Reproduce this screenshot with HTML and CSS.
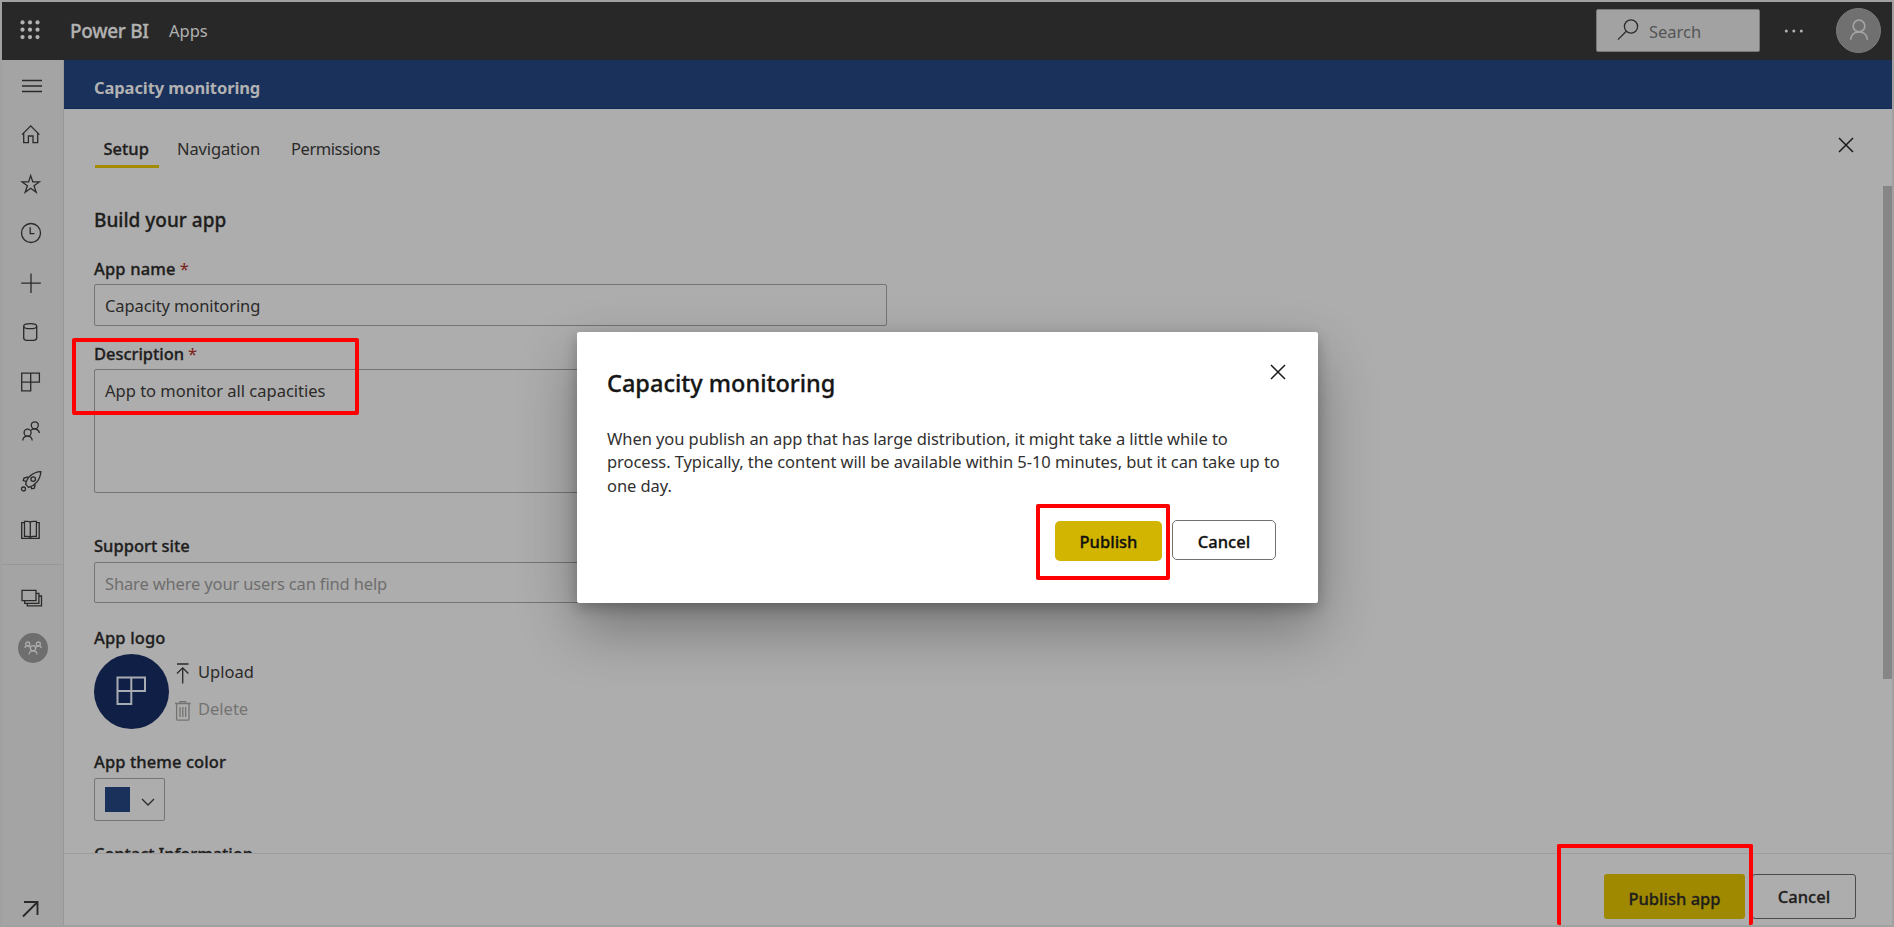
FILE: index.html
```html
<!DOCTYPE html>
<html lang="en">
<head>
<meta charset="utf-8">
<title>Power BI - Capacity monitoring</title>
<link rel="stylesheet" href="styles.css">
</head>
<body>
<div class="frame">
  <header class="topbar">
    <svg class="waffle" viewBox="0 0 20 20"><g><circle cx="2.5" cy="2.4" r="2.1"/><circle cx="10" cy="2.4" r="2.1"/><circle cx="17.5" cy="2.4" r="2.1"/><circle cx="2.5" cy="9.7" r="2.1"/><circle cx="10" cy="9.7" r="2.1"/><circle cx="17.5" cy="9.7" r="2.1"/><circle cx="2.5" cy="17.1" r="2.1"/><circle cx="10" cy="17.1" r="2.1"/><circle cx="17.5" cy="17.1" r="2.1"/></g></svg>
    <span class="brand">Power BI</span>
    <span class="area">Apps</span>
    <div class="search">
      <svg class="search-icon" viewBox="0 0 22 22"><circle cx="14" cy="7.5" r="6.6"/><path d="M9.3 12.3 1 20.6"/></svg>
      <span class="search-text">Search</span>
    </div>
    <svg class="more" viewBox="0 0 20 6"><circle cx="2.3" cy="3" r="1.5"/><circle cx="9.8" cy="3" r="1.5"/><circle cx="17.3" cy="3" r="1.5"/></svg>
    <div class="avatar"><svg viewBox="0 0 22 22"><circle cx="11" cy="7" r="5.8"/><path d="M2.6 20.8C3 15.6 6.600 12.900 11 12.900s8 2.700 8.400 7.900"/></svg></div>
  </header>
  <div class="body">
    <nav class="rail">
      <a class="item first"><svg viewBox="0 0 24 24"><path d="M3 6.500h20M3 12h20M3 17.500h20"/></svg></a>
      <a class="item"><svg viewBox="0 0 24 24"><path d="M3 12.600 11.700 3.900l8.700 8.700M4.700 11.300v9.400h4.700v-6.700h4.600v6.700h4.700v-9.400"/></svg></a>
      <a class="item"><svg viewBox="0 0 24 24"><path d="m11.700 3.600 2.100 6.300h6.500L15 13.800l2.200 6.500-5.500-4-5.500 4 2.200-6.500-5.300-3.900h6.500z"/></svg></a>
      <a class="item"><svg viewBox="0 0 24 24"><circle cx="12" cy="12" r="9.500"/><path d="M11.200 6.300v6.400h4.300"/></svg></a>
      <a class="item"><svg viewBox="0 0 24 24"><path d="M12 2.500v19.500M2.200 12.200h19.600"/></svg></a>
      <a class="item"><svg viewBox="0 0 24 24"><ellipse cx="11.200" cy="6.200" rx="6.500" ry="2.500"/><path d="M4.700 6.200v11.600c0 1.600 1.300 2.500 3 2.500h7c1.700 0 3-.9 3-2.500V6.200"/></svg></a>
      <a class="item"><svg viewBox="0 0 24 24"><path d="M2.700 3.200h17.700v9H2.700zM2.700 3.200v17.700h9V3.200"/></svg></a>
      <a class="item"><svg viewBox="0 0 24 24"><circle cx="15.800" cy="6.300" r="3.500"/><circle cx="8.600" cy="13.700" r="3.500"/><path d="M3.800 21.500c.2-2.800 2.200-4.300 4.800-4.300s4.300 1.500 4.600 4.300M12 11.200c2.600-2.200 7.700-1.700 8.400 2.800"/></svg></a>
      <a class="item"><svg viewBox="0 0 24 24"><path d="M8.200 16.900 6.700 15.400C7.600 8.300 13.800 3 21.800 2.600c-.2 8-5.800 14-12.100 15.800zM9.200 7.800l-4.200 1.300-.8 2.500 2.800.8M16.300 15.400l-1 3.800-2.600.6-.9-2.700"/><circle cx="14.200" cy="10.100" r="2.300"/><circle cx="4.500" cy="20" r="2"/></svg></a>
      <a class="item"><svg viewBox="0 0 24 24"><path d="M5.500 4.700H2.700v15.700h17.500V4.700h-2.800M5.500 18.300V3.300h3c1.600 0 2.800.4 2.800 1.500 0-1.100 1.200-1.500 2.800-1.500h3.300v15h-3.300c-1.600 0-2.800.4-2.800 1.500 0-1.100-1.200-1.500-2.800-1.500zM11.300 4.800v15"/></svg></a>
      <span class="divider"></span>
      <a class="item stack"><svg viewBox="0 0 24 24"><path d="M3 4.400h14v10.300H3zM5.700 15v2.400h14.200V7.300h-2.700M8.300 17.700v2.200h14.200V10H20"/></svg></a>
      <a class="item workspace"><span class="group"><svg viewBox="0 0 18 14"><circle cx="9" cy="7.300" r="2.600"/><circle cx="3.700" cy="3" r="2"/><circle cx="14.300" cy="3" r="2"/><path d="M5 13.600c0-2.200 1.500-3.700 4-3.700s4 1.500 4 3.700M.8 7c.2-2.500 3.500-2.800 5.300-.6M17.200 7c-.2-2.500-3.500-2.800-5.300-.6"/></svg></span></a>
      <a class="item last"><svg viewBox="0 0 24 24"><path d="M4 19.500 18.500 5M5 5h13.500v13"/></svg></a>
    </nav>
    <main class="main">
      <div class="banner"><span class="banner-title">Capacity monitoring</span></div>
      <div class="tabs">
        <a class="tab active"><span>Setup</span></a>
        <a class="tab nav-tab"><span>Navigation</span></a>
        <a class="tab perm-tab"><span>Permissions</span></a>
        <svg class="close" viewBox="0 0 16 16"><path d="m1 1 14 14M15 1 1 15"/></svg>
      </div>
      <div class="scroll">
        <div class="form">
          <h2 class="heading"><span>Build your app</span></h2>
          <div class="label"><span class="l-name">App name</span><b class="req">*</b></div>
          <div class="field input"><span class="v-name">Capacity monitoring</span></div>
          <div class="label"><span class="l-desc">Description</span><b class="req">*</b></div>
          <div class="field area-field"><span class="v-desc">App to monitor all capacities</span></div>
          <div class="label"><span class="l-support">Support site</span></div>
          <div class="field input support"><span class="v-support">Share where your users can find help</span></div>
          <div class="label"><span class="l-logo">App logo</span></div>
          <div class="logo-row">
            <div class="logo"><svg viewBox="0 0 30 30"><path d="M1.500 1.500h27.500v13.500H1.500zM1.500 1.500v26.500h13.800V1.500"/></svg></div>
            <div class="actions">
              <div class="action"><svg viewBox="0 0 16 22"><path d="M2 2h11.500M7.700 21.500V6M2 11.500 7.700 5.800l5.700 5.700"/></svg><span>Upload</span></div>
              <div class="action muted"><svg viewBox="0 0 16 22"><path d="M0 4.500h15.600M5 4.300V2.600h5.600v1.700M1.600 4.500v15.500c0 .8.400 1.200 1.200 1.200h10c.8 0 1.200-.4 1.200-1.200V4.500M5 8v10M7.800 8v10M10.600 8v10"/></svg><span>Delete</span></div>
            </div>
          </div>
          <div class="label theme-label"><span class="l-theme">App theme color</span></div>
          <div class="field picker"><i class="swatch"></i><svg viewBox="0 0 14 8"><path d="m1 1 6 6 6-6"/></svg></div>
          <div class="label"><span class="l-contact">Contact Information</span></div>
        </div>
        <div class="scrollbar"></div>
      </div>
      <footer class="footer">
        <button class="btn primary"><span>Publish app</span></button>
        <button class="btn"><span>Cancel</span></button>
      </footer>
    </main>
  </div>
</div>
<div class="dialog">
  <div class="dialog-head"><h1 class="dialog-title">Capacity monitoring</h1><svg class="close" viewBox="0 0 16 16"><path d="m1 1 14 14M15 1 1 15"/></svg></div>
  <p class="dialog-text"><span>When you publish an app that has large distribution, it might take a little while to</span><br><span>process. Typically, the content will be available within 5-10 minutes, but it can take up to</span><br><span>one day.</span></p>
  <div class="dialog-actions">
    <button class="dbtn yes"><span>Publish</span></button>
    <button class="dbtn no"><span>Cancel</span></button>
  </div>
</div>
<div class="mark mark-desc"></div>
<div class="mark mark-publish"></div>
<div class="mark mark-footer"></div>
</body>
</html>
```
FILE: styles.css
```css
* { box-sizing: border-box; }
body { margin: 0; width: 1894px; height: 927px; overflow: hidden; background: #a1a1a1; font-family: "Noto Sans", "Open Sans", sans-serif; font-size: 16.5px; line-height: 24px; color: #2b2a29; }
svg { display: block; flex: none; fill: none; stroke: currentColor; stroke-width: 1.3; overflow: visible; }
span { white-space: nowrap; }
.brand, .tab.active, .heading, .label span, .btn, .dbtn, .dialog-title { -webkit-text-stroke: .3px currentColor; }
.frame { width: 1894px; height: 927px; padding: 2px; display: flex; flex-direction: column; }
.topbar { height: 58px; flex: none; background: #282828; color: #b2b2b2; display: flex; align-items: center; padding-right: 11px; }
.waffle { width: 20px; height: 20px; margin: 0 0 2px 18px; }
.waffle circle, .more circle { fill: #b2b2b2; stroke: none; }
.brand { margin-left: 30px; width: 99px; font-size: 19px; font-weight: 500; letter-spacing: -.3px; }
.area { font-size: 16.5px; }
.search { position: relative; left: 1px; margin: 0 0 2px auto; width: 164px; height: 43px; border: 1px solid #777; border-radius: 2px; background: #a2a2a2; display: flex; align-items: center; color: #555; }
.search-icon { width: 22px; height: 22px; margin: 0 10px 0 20px; color: #2b2b2b; }
.search-text { padding-top: 3px; }
.more { width: 20px; height: 6px; margin: 0 32px 1px 25px; }
.avatar { width: 45px; height: 45px; margin-bottom: 2px; border-radius: 50%; background: #707070; border: 1px solid #7b7b7b; display: flex; align-items: center; justify-content: center; }
.avatar svg { width: 22px; height: 22px; color: #a4a4a4; stroke-width: 1.7; }
.body { flex: 1; display: flex; min-height: 0; }
.rail { width: 62px; background: #a4a4a4; border-right: 1px solid #979797; display: flex; flex-direction: column; }
.item { height: 49.500px; flex: none; padding: 13px 0 0 17px; color: #2b2a29; }
.item svg { width: 24px; height: 24px; }
.item.first { height: 49px; padding-top: 14px; }
.item.first svg { stroke-width: 1.7; }
.divider { height: 1px; background: #979797; margin: 9px 0 8px; flex: none; }
.item.workspace { padding: 11px 0 0 16px; }
.group { width: 30px; height: 30px; border-radius: 50%; background: #6e6e6e; display: flex; align-items: center; justify-content: center; }
.group svg { width: 18px; height: 14px; color: #adadad; stroke-width: 1.300; }
.item.last { margin-top: auto; height: 40px; padding-top: 12px; }
.item.last svg { stroke-width: 1.900; }
.main { flex: 1; background: #adadad; display: flex; flex-direction: column; min-width: 0; }
.banner { height: 49px; flex: none; background: #1a315c; border-bottom: 1px solid #122a58; color: #b2b2b2; font-weight: 700; letter-spacing: -.1px; padding: 16px 0 0 30px; }
.tabs { height: 59px; flex: none; display: flex; padding: 27px 38px 0 31px; }
.tab { height: 32px; padding-top: 1px; }
.tab.active { width: 64px; border-bottom: 3px solid #a28b00; padding-left: 8.500px; font-weight: 500; color: #1f1e1d; }
.nav-tab { margin-left: 18px; width: 114px; letter-spacing: -.12px; }
.perm-tab { letter-spacing: -.45px; }
.close { width: 16px; height: 16px; stroke-width: 1.500; color: #1a1a1a; }
.tabs .close { margin: 1px 0 0 auto; }
.scroll { height: 686px; flex: none; overflow: hidden; display: flex; justify-content: space-between; border-bottom: 1px solid #9d9d9d; }
.form { padding: 37px 0 0 30px; }
.heading { margin: 0 0 22px; font-size: 19px; line-height: 30px; font-weight: 500; color: #1f1e1d; }
.label { font-weight: 500; height: 27px; display: flex; color: #1f1e1d; }
.l-name, .l-logo { letter-spacing: .15px; }
.l-theme { letter-spacing: .08px; }
.l-desc { letter-spacing: -.05px; }
.l-contact { letter-spacing: -.1px; }
.req { color: #7c2018; font-weight: 400; margin-left: 4px; }
.field { width: 793px; border: 1px solid #747474; border-radius: 2px; padding: 9px 10px; }
.v-name { letter-spacing: -.1px; }
.v-support { letter-spacing: -.15px; }
.input { height: 42px; margin-bottom: 16px; }
.area-field { height: 124px; margin-bottom: 41px; }
.input.support { height: 41px; margin: 1px 0 23px; color: #6f6e6d; }
.logo-row { display: flex; gap: 6px; height: 97px; padding-top: 1px; }
.logo { width: 75px; height: 75px; border-radius: 50%; background: #101f45; display: flex; align-items: center; justify-content: center; }
.logo svg { width: 30px; height: 30px; color: #a7abb2; stroke-width: 2; margin-right: 2px; margin-top: -2px; }
.action { display: flex; height: 37px; gap: 7px; padding-top: 6px; }
.action svg { width: 16px; height: 22px; margin-top: 2px; }
.muted { color: #747372; }
.picker { width: 71px; height: 43px; margin: 1px 0 21px; padding: 8px 9px 8px 10px; display: flex; justify-content: space-between; }
.swatch { width: 25px; height: 25px; background: #1a315c; }
.picker svg { width: 14px; height: 8px; margin-top: 11px; }
.scrollbar { width: 9px; height: 493px; margin-top: 18px; background: #868686; }
.footer { flex: 1; display: flex; justify-content: flex-end; padding: 20px 36px 0 0; gap: 7px; }
.btn { width: 104px; height: 45px; border: 1px solid #4b4b4b; border-radius: 3px; background: none; font: 500 16.500px/24px "Noto Sans", sans-serif; color: #1f1e1d; padding: 1px 0 0; }
.primary { width: 141px; border: 0; background: #9f8900; padding-top: 4px; }
.dialog { position: absolute; left: 577px; top: 332px; width: 741px; height: 271px; background: #fff; border-radius: 2px; padding: 35px 30px; box-shadow: 0 26px 58px rgba(0,0,0,.32), 0 5px 14px rgba(0,0,0,.24); }
.dialog-head { display: flex; justify-content: space-between; height: 60px; }
.dialog-title { margin: 0; font-size: 23.500px; line-height: 33px; font-weight: 500; color: #161616; white-space: nowrap; }
.dialog .close { margin: -3px 2px 0 0; }
.dialog-text { margin: 0; line-height: 23.300px; height: 93px; color: #323130; letter-spacing: -.07px; }
.dialog-actions { display: flex; justify-content: flex-end; gap: 10px; padding-right: 12px; }
.dbtn { height: 40px; border-radius: 5px; font: 500 16.500px/24px "Noto Sans", sans-serif; color: #111; padding: 3px 0 0; }
.yes { width: 107px; background: #d1b500; border: 0; margin-top: 1px; padding-top: 2px; }
.no { width: 104px; background: #fff; border: 1px solid #707070; }
.mark { position: absolute; border: 4px solid #f00; border-radius: 2px; }
.mark-desc { left: 72px; top: 338px; width: 287px; height: 77px; }
.mark-publish { left: 1036px; top: 504px; width: 134px; height: 76px; }
.mark-footer { left: 1557px; top: 844px; width: 196px; height: 81px; border-bottom: 0; }
```
